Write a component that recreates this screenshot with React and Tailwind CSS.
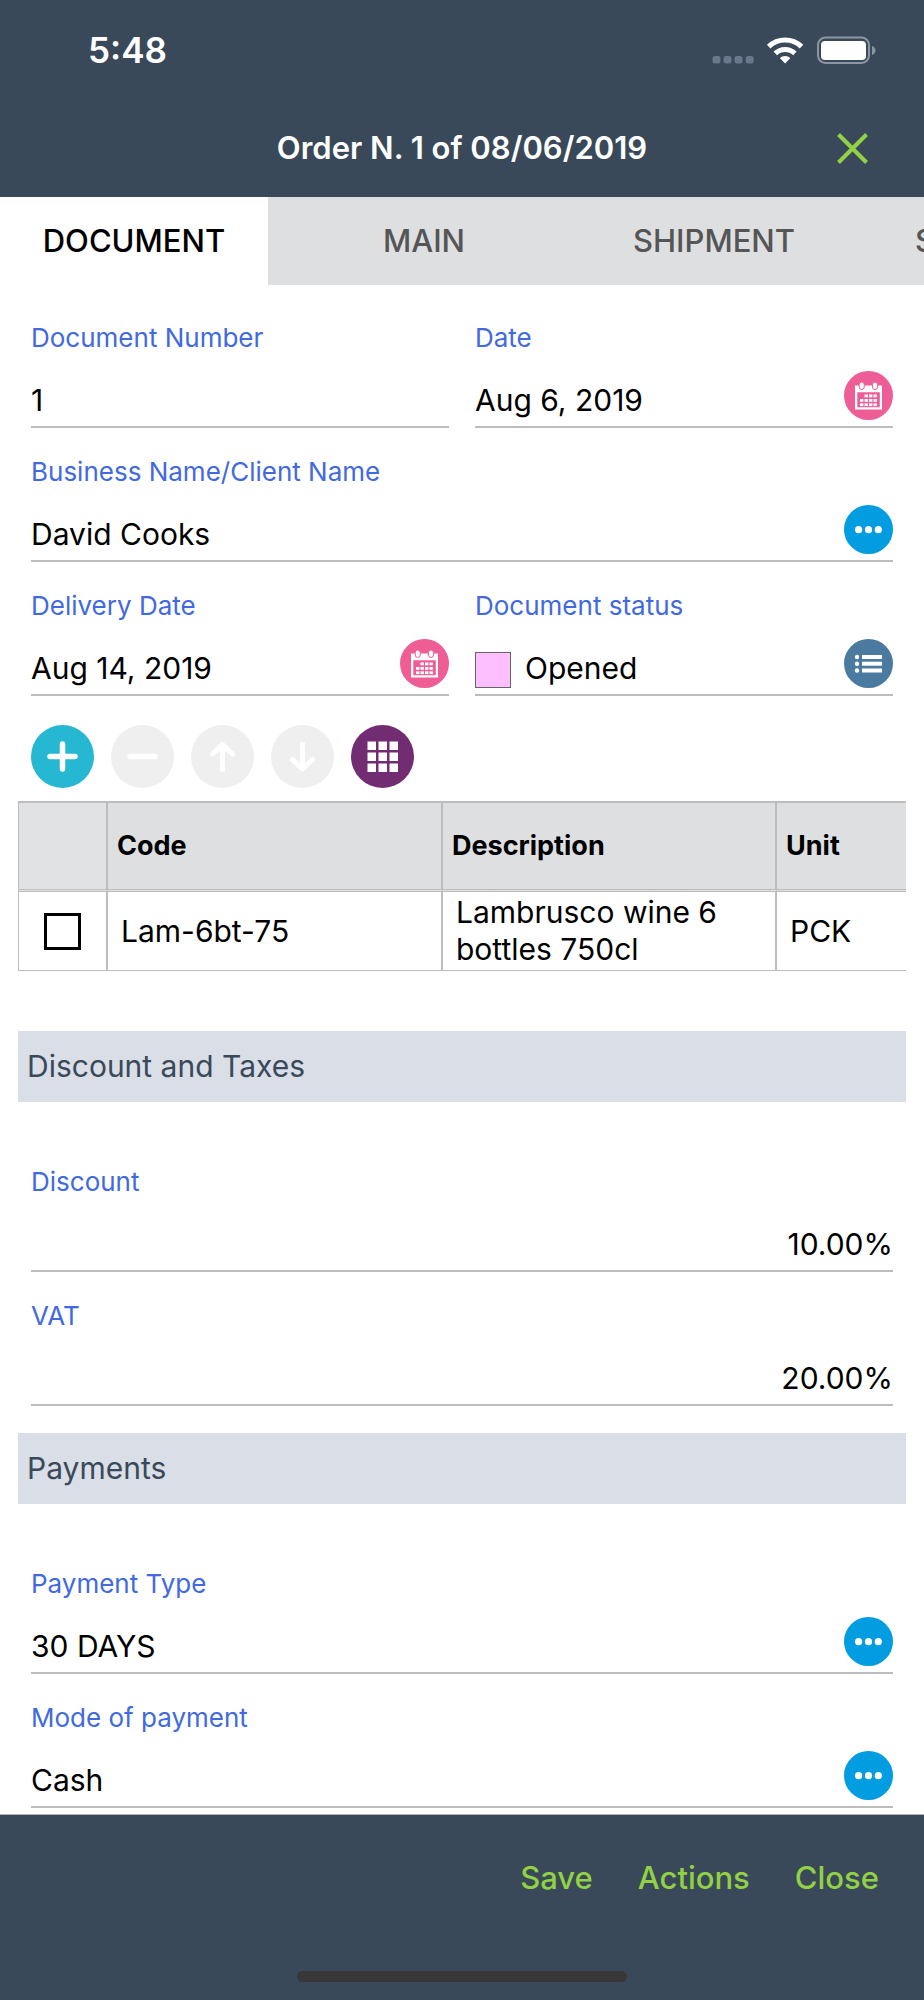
import { useState } from 'react';

const TABS = ['DOCUMENT', 'MAIN', 'SHIPMENT'];

const ROWS = [{ id: 1, code: 'Lam-6bt-75', description: 'Lambrusco wine 6 bottles 750cl', unit: 'PCK' }];

const CALENDAR_CELLS = [
  [20.5, 23.5], [25, 23.5], [29.5, 23.5],
  [16, 28], [20.5, 28], [25, 28], [29.5, 28],
  [16, 32.3], [20.5, 32.3], [25, 32.3], [29.5, 32.3],
];

const StatusIcons = () => (
  <svg width="164" height="28" viewBox="0 0 164 28" aria-hidden="true">
    <g fill="#69788a">
      <rect x="0.5" y="20" width="8" height="7.5" rx="2.5" />
      <rect x="11.5" y="20" width="8" height="7.5" rx="2.5" />
      <rect x="22.5" y="20" width="8" height="7.5" rx="2.5" />
      <rect x="33.7" y="20" width="8" height="7.5" rx="2.5" />
    </g>
    <g fill="none" stroke="#fff" strokeWidth="5">
      <path d="M56.7 10.6A23.6 23.6 0 0 1 89.5 10.6" />
      <path d="M63.3 17.4A14 14 0 0 1 82.9 17.4" />
    </g>
    <path d="M73.1 27.4L67.8 22.1A7.6 7.6 0 0 1 78.4 22.1Z" fill="#fff" />
    <rect x="106" y="1.5" width="51" height="25.5" rx="7.5" fill="none" stroke="#8b96a1" strokeWidth="2" />
    <rect x="109" y="5" width="45" height="19" rx="4" fill="#fff" />
    <path d="M160 10C164.6 11.5 164.6 17.5 160 19Z" fill="#8b96a1" />
  </svg>
);

const CalendarIcon = () => (
  <svg className="size-full" viewBox="0 0 49 49" aria-hidden="true">
    <path d="M11 14.5H38V38.5H11ZM13.3 21.3V36.3H35.8V21.3Z" fill="#fff" fillRule="evenodd" />
    <g fill="#fff" stroke="#ef5d96" strokeWidth="1">
      <rect x="15.2" y="11" width="5" height="7.5" rx="2.5" />
      <rect x="28.5" y="11" width="5" height="7.5" rx="2.5" />
    </g>
    {CALENDAR_CELLS.map(([x, y]) => (
      <rect key={`${x}-${y}`} x={x} y={y} width="3.4" height="2.8" fill="#fff" />
    ))}
  </svg>
);

const DotsIcon = () => (
  <svg className="size-full" viewBox="0 0 49 49" fill="#fff" aria-hidden="true">
    <circle cx="14.6" cy="24.7" r="3.6" />
    <circle cx="24.5" cy="24.7" r="3.6" />
    <circle cx="34.3" cy="24.7" r="3.6" />
  </svg>
);

const ListIcon = () => (
  <svg className="size-full" viewBox="0 0 49 49" fill="#fff" aria-hidden="true">
    <circle cx="13" cy="18" r="2.2" />
    <circle cx="13" cy="24.7" r="2.2" />
    <circle cx="13" cy="31.5" r="2.2" />
    <rect x="18" y="16" width="20" height="4" />
    <rect x="18" y="22.7" width="20" height="4" />
    <rect x="18" y="29.5" width="20" height="4" />
  </svg>
);

const FIELD_ACTIONS = {
  calendar: { label: 'Pick a date', className: 'bg-[#ef5d96]', Icon: CalendarIcon },
  lookup: { label: 'Look up', className: 'bg-[#029ce0]', Icon: DotsIcon },
  list: { label: 'Choose from list', className: 'bg-[#4a7a9f]', Icon: ListIcon },
};

const Field = ({ id, label, value, action, swatch = false, alignRight = false }) => {
  const config = FIELD_ACTIONS[action];

  return (
    <div className="min-w-0 flex-1 pt-7">
      <label htmlFor={id} className="block text-[26px] leading-8 text-[#4169e1]">
        {label}
      </label>
      <div className="mt-4 flex h-[58px] items-end gap-3.5 border-b-2 border-[#bdbdbd] pb-1.5">
        {swatch && <span className="size-9 shrink-0 border border-[#666] bg-[#fdbfff]" />}
        <input
          id={id}
          defaultValue={value}
          className={`h-10 w-full min-w-0 flex-1 bg-transparent text-[30px] leading-10 text-black outline-none ${
            alignRight ? 'text-right' : ''
          }`}
        />
        {config && (
          <button
            type="button"
            aria-label={`${config.label}: ${label}`}
            className={`size-[49px] shrink-0 rounded-full ${config.className}`}
          >
            <config.Icon />
          </button>
        )}
      </div>
    </div>
  );
};

const ToolButton = ({ label, className, disabled = false, children }) => (
  <button
    type="button"
    aria-label={label}
    disabled={disabled}
    className={`size-[63px] shrink-0 rounded-full ${className}`}
  >
    <svg
      className="size-full"
      viewBox="0 0 63 63"
      fill="none"
      stroke="#fff"
      strokeWidth="5"
      strokeLinecap="round"
      strokeLinejoin="round"
      aria-hidden="true"
    >
      {children}
    </svg>
  </button>
);

const SectionTitle = ({ children }) => (
  <h2 className="mx-[18px] bg-[#dadee6] px-[9px] py-4 text-[30px] leading-[39px] text-[#39495a]">{children}</h2>
);

const ItemsTable = () => (
  <div className="mx-[18px] overflow-hidden">
    <table className="w-full table-fixed border-separate border-spacing-0 border-t-2 border-l border-[#bdbdbd] text-left">
      <thead>
        <tr className="h-[89px] bg-[#dedfe1] text-[27px] font-bold">
          <th
            aria-label="Select"
            className="w-[89px] border-r-2 border-b-3 border-[#bdbdbd] bg-[#e1e2e4] [border-bottom-style:double]"
          />
          <th className="w-[335px] border-r-2 border-b-3 border-[#bdbdbd] px-[9px] [border-bottom-style:double]">
            Code
          </th>
          <th className="w-[334px] border-r-2 border-b-3 border-[#bdbdbd] px-[9px] [border-bottom-style:double]">
            Description
          </th>
          <th className="border-b-3 border-[#bdbdbd] px-[9px] [border-bottom-style:double]">Unit</th>
        </tr>
      </thead>
      <tbody>
        {ROWS.map((row) => (
          <tr key={row.id} className="h-[79px] text-[30px] leading-[37px]">
            <td className="border-r-2 border-b border-[#bdbdbd]">
              <input
                type="checkbox"
                aria-label={`Select ${row.code}`}
                className="mx-auto block size-[37px] appearance-none border-3 border-black checked:bg-black"
              />
            </td>
            <td className="border-r-2 border-b border-[#bdbdbd] px-[13px]">{row.code}</td>
            <td className="border-r-2 border-b border-[#bdbdbd] px-[13px]">{row.description}</td>
            <td className="border-b border-[#bdbdbd] px-[13px]">{row.unit}</td>
          </tr>
        ))}
      </tbody>
    </table>
  </div>
);

const App = () => {
  const [activeTab, setActiveTab] = useState('DOCUMENT');

  return (
    <div className="flex min-h-screen flex-col bg-white font-['Inter',sans-serif] text-black">
      <header className="bg-[#39495a] text-white">
        <div className="flex h-[100px] items-center justify-between pr-12 pl-[88px]">
          <span className="text-[35px] font-semibold">5:48</span>
          <StatusIcons />
        </div>
        <div className="grid h-[97px] grid-cols-[1fr_auto_1fr] items-center">
          <h1 className="col-start-2 text-[31px] font-semibold">Order N. 1 of 08/06/2019</h1>
          <button type="button" aria-label="Close order" className="mr-14 justify-self-end">
            <svg width="31" height="31" viewBox="0 0 31 31" stroke="#92d143" strokeWidth="4" aria-hidden="true">
              <path d="M1.5 1.5L29.5 29.5M29.5 1.5L1.5 29.5" />
            </svg>
          </button>
        </div>
      </header>

      <nav className="flex h-[88px] gap-[22px] overflow-hidden bg-[#dedfe1] text-[31px] font-medium">
        {TABS.map((tab) => (
          <button
            key={tab}
            type="button"
            onClick={() => setActiveTab(tab)}
            className={`w-[268px] shrink-0 ${activeTab === tab ? 'bg-white text-black' : 'text-[#555]'}`}
          >
            {tab}
          </button>
        ))}
        <button type="button" className="w-[268px] shrink-0 pl-[45px] text-left text-[#555]">
          S
        </button>
      </nav>

      <main className="pt-[9px] pb-1.5">
        <div className="px-[31px]">
          <div className="flex gap-[26px]">
            <Field id="number" label="Document Number" value="1" />
            <Field id="date" label="Date" value="Aug 6, 2019" action="calendar" />
          </div>
          <div className="flex">
            <Field id="client" label="Business Name/Client Name" value="David Cooks" action="lookup" />
          </div>
          <div className="flex gap-[26px]">
            <Field id="delivery" label="Delivery Date" value="Aug 14, 2019" action="calendar" />
            <Field id="status" label="Document status" value="Opened" action="list" swatch />
          </div>
        </div>

        <div className="flex gap-[17px] px-[31px] pt-[29px] pb-[13px]">
          <ToolButton label="Add row" className="bg-[#26b7d3]">
            <path d="M31.5 19V44M19 31.5H44" strokeWidth="5.5" />
          </ToolButton>
          <ToolButton label="Remove row" className="bg-[#efefef]" disabled>
            <path d="M19 31.5H44" strokeWidth="5.5" />
          </ToolButton>
          <ToolButton label="Move up" className="bg-[#efefef]" disabled>
            <path d="M31.5 19.5V44.5M21.5 29L31.5 19.5L41.5 29" />
          </ToolButton>
          <ToolButton label="Move down" className="bg-[#efefef]" disabled>
            <path d="M31.5 19V44M21.5 34.5L31.5 44L41.5 34.5" />
          </ToolButton>
          <ToolButton label="Grid view" className="bg-[#722c72]">
            <g fill="#fff" stroke="none">
              {[16.5, 27.5, 38.5].map((y) =>
                [16.5, 27.5, 38.5].map((x) => <rect key={`${x}-${y}`} x={x} y={y} width="8.5" height="8.5" />)
              )}
            </g>
          </ToolButton>
        </div>

        <ItemsTable />

        <section className="pt-[60px]">
          <SectionTitle>Discount and Taxes</SectionTitle>
          <div className="px-[31px] pt-9">
            <Field id="discount" label="Discount" value="10.00%" alignRight />
            <Field id="vat" label="VAT" value="20.00%" alignRight />
          </div>
        </section>

        <section className="pt-[27px]">
          <SectionTitle>Payments</SectionTitle>
          <div className="px-[31px] pt-9">
            <Field id="payment-type" label="Payment Type" value="30 DAYS" action="lookup" />
            <Field id="payment-mode" label="Mode of payment" value="Cash" action="lookup" />
          </div>
        </section>
      </main>

      <footer className="mt-auto flex flex-col items-center border-t border-[#b0b5ba] bg-[#39495a]">
        <div className="flex h-[126px] w-full items-center justify-end gap-[45px] pr-[45px] text-[31px] font-medium text-[#92d143]">
          <button type="button">Save</button>
          <button type="button">Actions</button>
          <button type="button">Close</button>
        </div>
        <div className="mt-[30px] mb-[18px] h-[11px] w-[330px] rounded-full bg-[#373737]" />
      </footer>
    </div>
  );
};

export default App;
